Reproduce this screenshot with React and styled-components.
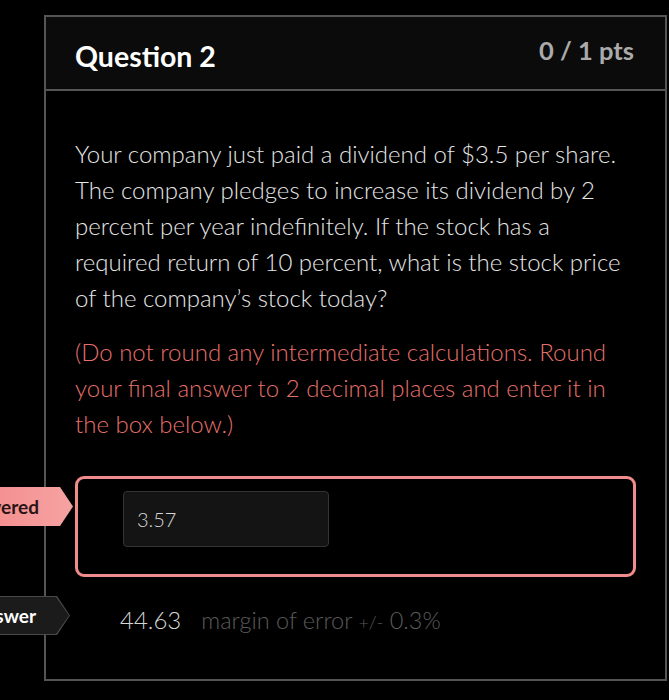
import styled, { createGlobalStyle } from 'styled-components';

const GlobalStyle = createGlobalStyle`
    html, body {
        margin: 0;
        background: #000;
        font-family: Lato, "Open Sans", sans-serif;
        overflow: hidden;
    }
`;

const Page = styled.div`
    padding: 15px 2px 20px 44px;
    min-height: 700px;
    box-sizing: border-box;
`;

const Card = styled.div`
    width: 623px;
    border: 2px solid #555;
    box-sizing: border-box;
`;

const Header = styled.div`
    display: flex;
    justify-content: space-between;
    align-items: flex-start;
    height: 74px;
    box-sizing: border-box;
    padding: 0 31px 0 29px;
    background: #0b0b0b;
    border-bottom: 2px solid #555;
`;

const Title = styled.h2`
    margin: 22px 0 0;
    font-size: 28.5px;
    font-weight: 700;
    color: #fff;
`;

const Points = styled.div`
    margin-top: 18px;
    font-size: 25.5px;
    font-weight: 700;
    color: #aaa;
`;

const Body = styled.div`
    padding: 45px 29px 41px;
`;

const Paragraph = styled.p`
    margin: 0 0 18px;
    font-size: 24px;
    line-height: 36px;
    font-weight: 300;
    color: ${p => (p.$note ? '#e5706b' : '#e6e6e6')};
`;

const AnswerBlock = styled.div`
    position: relative;
    margin-top: 34px;
    height: 101px;
    border: 3px solid #f08c8c;
    border-radius: 9px;
    box-sizing: border-box;
    padding: 12px 45px;
`;

const Input = styled.div`
    width: 206px;
    height: 56px;
    box-sizing: border-box;
    padding-left: 13px;
    display: flex;
    align-items: center;
    background: #141414;
    border: 1px solid #333;
    border-radius: 4px;
    font-size: 20px;
    font-weight: 300;
    color: #d6d6d6;
`;

const Tag = styled.div`
    position: absolute;
    right: calc(100% + 5px);
    top: ${p => p.$top}px;
    height: 39px;
    padding: 0 34px 0 20px;
    display: flex;
    align-items: center;
    white-space: nowrap;
    font-size: 19px;
    font-weight: 700;
    color: ${p => (p.$dark ? '#fff' : '#2a1414')};
    background: ${p => (p.$dark ? '#4a4a4a' : 'linear-gradient(90deg, #f27676, #f6a3a3)')};
    clip-path: polygon(0 0, calc(100% - 13px) 0, 100% 50%, calc(100% - 13px) 100%, 0 100%);

    &::before {
        content: '';
        display: ${p => (p.$dark ? 'block' : 'none')};
        position: absolute;
        inset: 1px 1px 1px 0;
        background: #1b1b1b;
        clip-path: polygon(0 0, calc(100% - 13px) 0, 100% 50%, calc(100% - 13px) 100%, 0 100%);
    }

    span {
        position: relative;
    }
`;

const CorrectRow = styled.div`
    position: relative;
    display: flex;
    align-items: baseline;
    gap: 20px;
    margin-top: 25px;
    padding-left: 45px;
    height: 36px;
    line-height: 36px;
`;

const CorrectValue = styled.span`
    font-size: 24px;
    font-weight: 300;
    color: #d6d6d6;
`;

const Margin = styled.span`
    font-size: 23.5px;
    font-weight: 300;
    color: #5a5a5a;

    small {
        font-size: 18px;
    }
`;

export default function App() {
    return (
        <Page>
            <GlobalStyle />
            <Card>
                <Header>
                    <Title>Question 2</Title>
                    <Points>0 / 1 pts</Points>
                </Header>
                <Body>
                    <Paragraph>
                        Your company just paid a dividend of $3.5 per share. The company pledges to increase its dividend by 2 percent per year indefinitely. If the stock has a required return of 10 percent, what is the stock price of the company’s stock today?
                    </Paragraph>
                    <Paragraph $note>
                        (Do not round any intermediate calculations. Round your final answer to 2 decimal places and enter it in the box below.)
                    </Paragraph>
                    <AnswerBlock>
                        <Tag $top={8}><span>You Answered</span></Tag>
                        <Input>3.57</Input>
                    </AnswerBlock>
                    <CorrectRow>
                        <Tag $dark $top={-6}><span>Correct Answer</span></Tag>
                        <CorrectValue>44.63</CorrectValue>
                        <Margin>margin of error <small>+/-</small> 0.3%</Margin>
                    </CorrectRow>
                </Body>
            </Card>
        </Page>
    );
}
